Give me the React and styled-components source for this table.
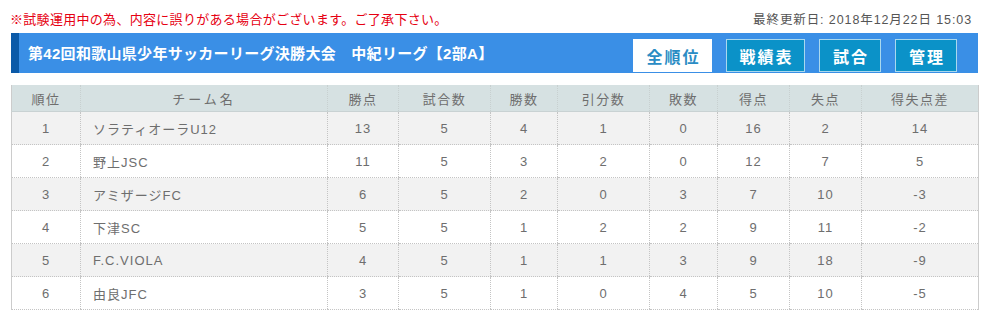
import React from 'react';
import styled, { createGlobalStyle } from 'styled-components';

const GlobalStyle = createGlobalStyle`
  body {
    margin: 0;
    background: #fff;
    font-family: "Liberation Sans", Arial, "Noto Sans CJK JP", sans-serif;
  }
`;

const Page = styled.div`
  width: 967px;
  margin-left: 11px;
`;

const TopLine = styled.div`
  height: 33px;
  display: flex;
  align-items: center;
  justify-content: space-between;
  padding-top: 3px;
  box-sizing: border-box;
`;

const Notice = styled.span`
  margin-left: -1px;
  color: #e60012;
  font-size: 13px;
  letter-spacing: 0.3px;
`;

const Updated = styled.span`
  color: #555;
  font-size: 12.5px;
  letter-spacing: 0.9px;
  margin-right: 6px;
`;

const TitleBar = styled.div`
  height: 40px;
  display: flex;
  align-items: stretch;
  justify-content: space-between;
  background: #3a8fe6;
  border-left: 8px solid #0b5aa8;
  box-sizing: border-box;
  padding: 6px 21px 1px 9px;
`;

const Title = styled.h1`
  margin: 0;
  align-self: center;
  margin-top: -6px;
  color: #fff;
  font-size: 15px;
  font-weight: bold;
  letter-spacing: 0.3px;
`;

const Menu = styled.nav`
  display: flex;
  gap: 14px;
`;

const MenuButton = styled.a`
  display: flex;
  align-items: center;
  justify-content: center;
  width: ${({ $wide }) => ($wide ? '79px' : '62px')};
  box-sizing: border-box;
  border: 1px solid ${({ $active }) => ($active ? '#fff' : '#a9d8ee')};
  background: ${({ $active }) => ($active ? '#fff' : '#0b92c8')};
  color: ${({ $active }) => ($active ? '#2a8cc4' : '#fff')};
  font-size: 16px;
  font-weight: bold;
  letter-spacing: 2px;
  text-decoration: none;
  padding-left: 2px;
`;

const Table = styled.table`
  margin-top: 12px;
  width: 967px;
  border-collapse: collapse;
  table-layout: fixed;
  border-left: 1px solid #ccc;
  border-right: 1px solid #ccc;
  color: #6e6e6e;
  font-size: 13px;
  letter-spacing: 1px;
`;

const Th = styled.th`
  height: 26px;
  padding: 0;
  background: #d6e1e2;
  font-weight: normal;
  color: #6e6e6e;
  border-left: 1px dotted #c8d0d0;
  border-bottom: 1px solid #c9d2d3;
  letter-spacing: ${({ $loose }) => ($loose ? '3px' : '1.5px')};
`;

const Row = styled.tr`
  background: ${({ $odd }) => ($odd ? '#f2f2f2' : '#fff')};
`;

const Td = styled.td`
  height: 32px;
  padding: 0 0 0 ${({ $left }) => ($left ? '12px' : '0')};
  text-align: ${({ $left }) => ($left ? 'left' : 'center')};
  border-left: 1px dotted #c4c4c4;
  border-bottom: 1px dotted #c4c4c4;
  white-space: nowrap;
`;

const columns = [
  { label: '順位', width: 69 },
  { label: 'チーム名', width: 247, loose: true },
  { label: '勝点', width: 71 },
  { label: '試合数', width: 92 },
  { label: '勝数', width: 67 },
  { label: '引分数', width: 92 },
  { label: '敗数', width: 68 },
  { label: '得点', width: 72 },
  { label: '失点', width: 72 },
  { label: '得失点差', width: 117 },
];

const teams = [
  [1, 'ソラティオーラU12', 13, 5, 4, 1, 0, 16, 2, 14],
  [2, '野上JSC', 11, 5, 3, 2, 0, 12, 7, 5],
  [3, 'アミザージFC', 6, 5, 2, 0, 3, 7, 10, -3],
  [4, '下津SC', 5, 5, 1, 2, 2, 9, 11, -2],
  [5, 'F.C.VIOLA', 4, 5, 1, 1, 3, 9, 18, -9],
  [6, '由良JFC', 3, 5, 1, 0, 4, 5, 10, -5],
];

export default function App() {
  return (
    <Page>
      <GlobalStyle />
      <TopLine>
        <Notice>※試験運用中の為、内容に誤りがある場合がございます。ご了承下さい。</Notice>
        <Updated>最終更新日: 2018年12月22日 15:03</Updated>
      </TopLine>
      <TitleBar>
        <Title>第42回和歌山県少年サッカーリーグ決勝大会　中紀リーグ【2部A】</Title>
        <Menu>
          <MenuButton $active $wide>全順位</MenuButton>
          <MenuButton $wide>戦績表</MenuButton>
          <MenuButton>試合</MenuButton>
          <MenuButton>管理</MenuButton>
        </Menu>
      </TitleBar>
      <Table>
        <colgroup>
          {columns.map((c) => (
            <col key={c.label} style={{ width: c.width }} />
          ))}
        </colgroup>
        <thead>
          <tr>
            {columns.map((c) => (
              <Th key={c.label} $loose={c.loose}>{c.label}</Th>
            ))}
          </tr>
        </thead>
        <tbody>
          {teams.map((t, i) => (
            <Row key={t[0]} $odd={i % 2 === 0}>
              {t.map((v, j) => (
                <Td key={j} $left={j === 1}>{v}</Td>
              ))}
            </Row>
          ))}
        </tbody>
      </Table>
    </Page>
  );
}
